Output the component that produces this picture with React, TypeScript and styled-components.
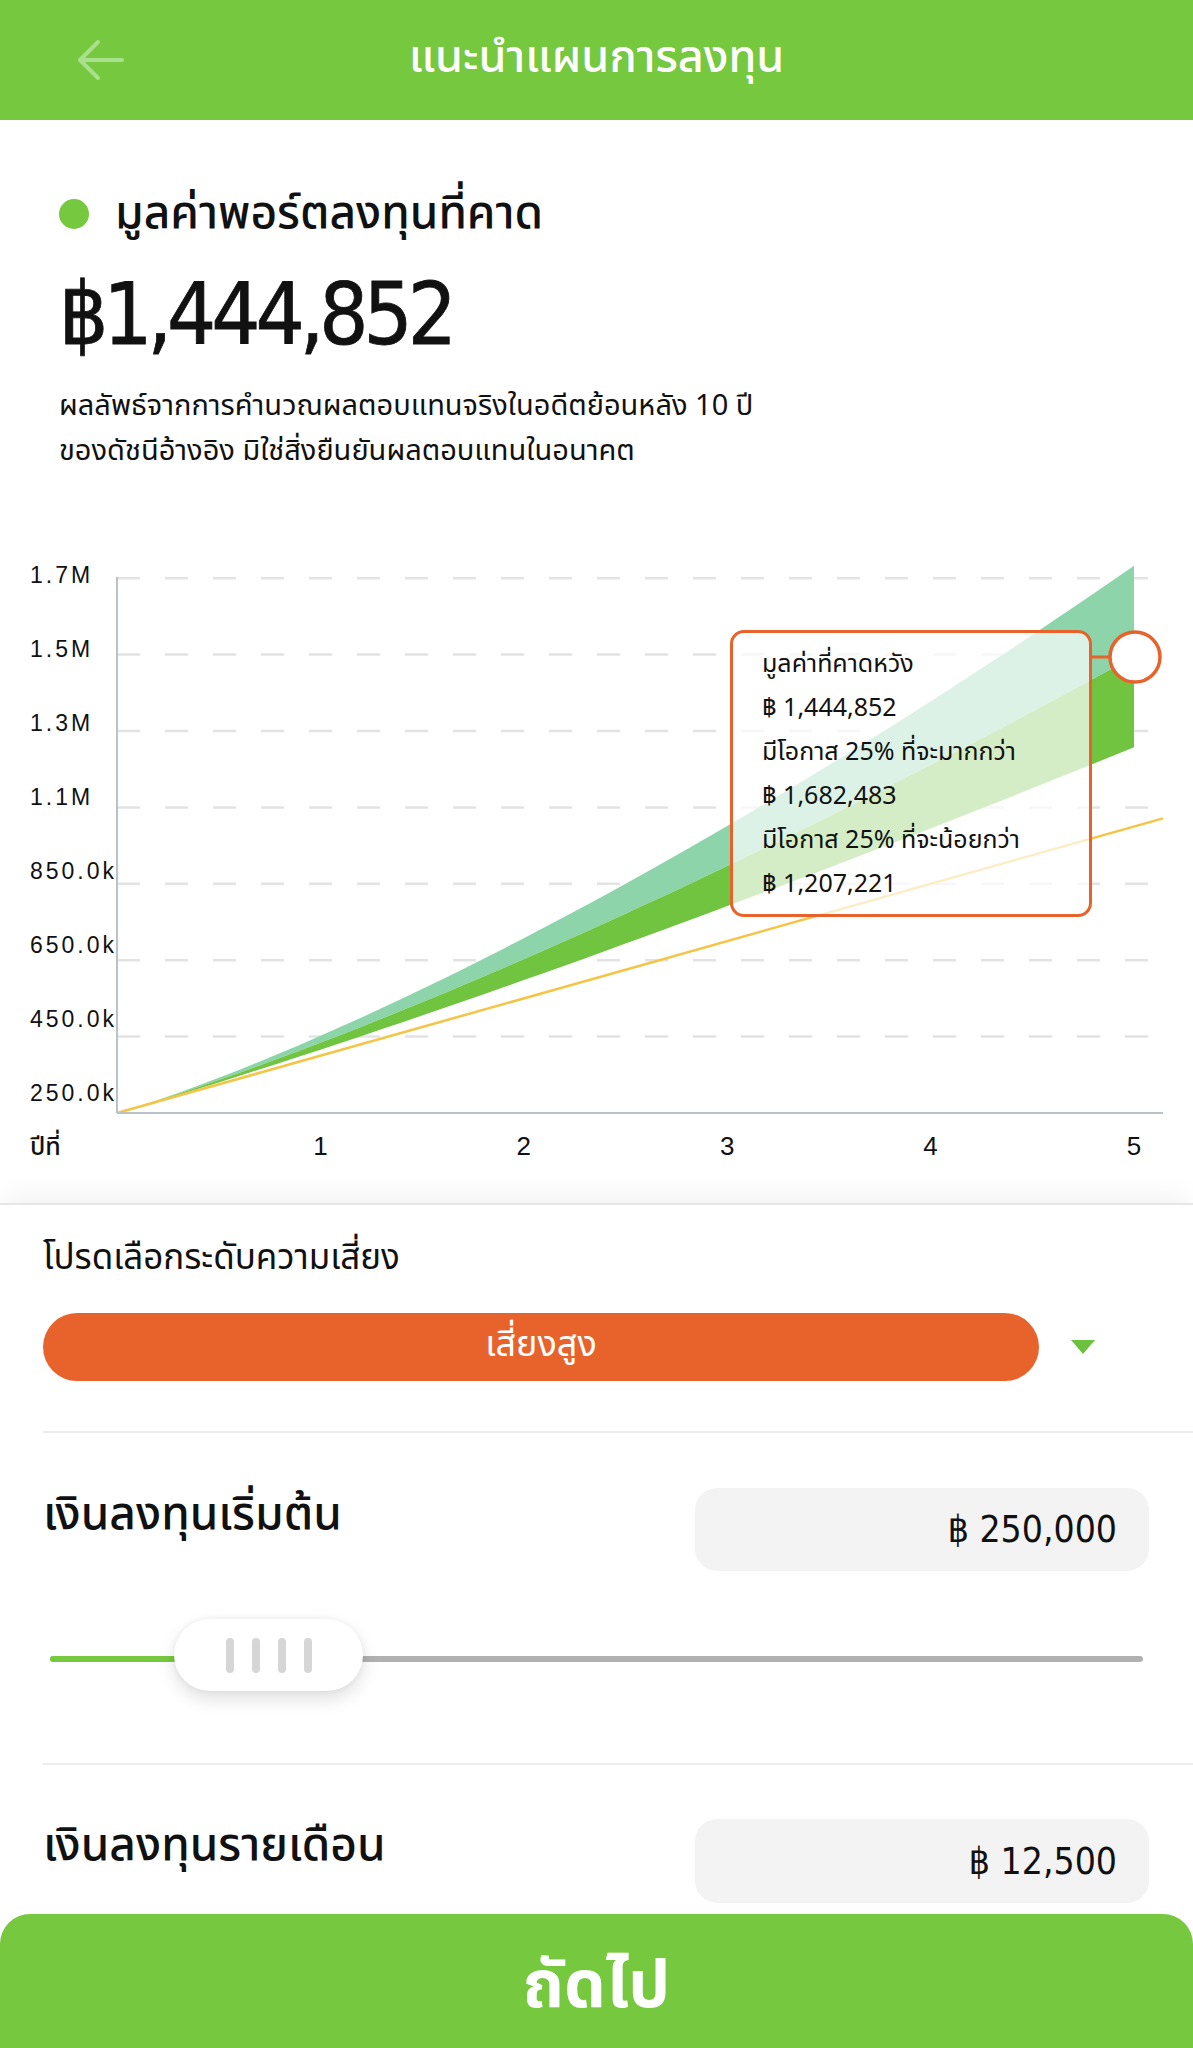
import React from "react";
import styled, { createGlobalStyle } from "styled-components";

const THAI = `"Noto Sans Thai", "Noto Sans Thai UI", "Noto Sans", "Loma", "Garuda", sans-serif`;
const NUM = `"Liberation Sans Narrow", "DejaVu Sans Condensed", "Noto Sans Thai", "Noto Sans", sans-serif`;

const GREEN = "#76C83F";
const ORANGE = "#E8632B";

const GlobalStyle = createGlobalStyle`
  html, body { margin: 0; padding: 0; background: #fff; }
  body { font-family: ${THAI}; color: #111; }
  * { box-sizing: border-box; }
`;

const Page = styled.div`
  width: 1193px;
  height: 2048px;
  display: flex;
  flex-direction: column;
  background: #fff;
  overflow: hidden;
`;

const Header = styled.header`
  height: 120px;
  flex: none;
  background: ${GREEN};
  display: grid;
  grid-template-columns: 1fr auto 1fr;
  align-items: center;
`;

const BackButton = styled.button`
  justify-self: start;
  margin-left: 74px;
  padding: 0;
  border: 0;
  background: none;
  display: flex;
  align-items: center;
`;

const HeaderTitle = styled.h1`
  margin: 0 0 4px;
  font-family: ${THAI};
  font-weight: 500;
  font-size: 45px;
  color: #fff;
`;

const Summary = styled.section`
  padding: 68px 59px 0;
  height: 350px;
  flex: none;
`;

const HeadingRow = styled.div`
  display: flex;
  align-items: center;
  gap: 26px;
  height: 52px;
`;

const Dot = styled.span`
  width: 30px;
  height: 30px;
  border-radius: 50%;
  background: ${GREEN};
  flex: none;
`;

const Heading = styled.h2`
  margin: 0;
  font-size: 46px;
  font-weight: 500;
  line-height: 52px;
`;

const BigValue = styled.div`
  margin-top: 26px;
  font-family: ${NUM};
  font-size: 86px;
  font-weight: 500;
  line-height: 96px;
  letter-spacing: -5px;
  color: #111;
  -webkit-text-stroke: 0.8px #111;
`;

const Note = styled.p`
  margin: 22px 0 0;
  font-size: 29px;
  line-height: 45px;
  color: #111;
`;

const ChartWrap = styled.div`
  position: relative;
  height: 733px;
  flex: none;
`;

const ChartSvg = styled.svg`
  display: block;
`;

const Tooltip = styled.div`
  position: absolute;
  left: 730px;
  top: 160px;
  width: 362px;
  height: 287px;
  border: 3px solid ${ORANGE};
  border-radius: 14px;
  background: rgba(255, 255, 255, 0.7);
  padding: 9px 0 0 29px;
  font-size: 25px;
  line-height: 44px;
  color: #111;
`;

const TipLine = styled.div`
  white-space: nowrap;
`;

const Panel = styled.section`
  flex: 1;
  display: flex;
  flex-direction: column;
  border-top: 2px solid #e6e6e6;
  box-shadow: 0 -14px 24px -6px rgba(0, 0, 0, 0.05);
`;

const PanelBody = styled.div`
  display: flex;
  flex-direction: column;
  padding-left: 43px;
`;

const RiskLabel = styled.div`
  margin-top: 32px;
  font-size: 35px;
  line-height: 44px;
`;

const RiskRow = styled.div`
  margin-top: 32px;
  display: flex;
  align-items: center;
  gap: 32px;
`;

const RiskPill = styled.button`
  width: 996px;
  height: 68px;
  border: 0;
  border-radius: 34px;
  background: ${ORANGE};
  color: #fff;
  font-family: ${THAI};
  font-size: 36px;
  font-weight: 400;
  padding: 0 0 4px;
`;

const Caret = styled.span`
  width: 0;
  height: 0;
  border-left: 12px solid transparent;
  border-right: 12px solid transparent;
  border-top: 14px solid #6cc23e;
`;

const Divider = styled.hr<{ $top: number }>`
  margin: ${(p) => p.$top}px 0 0;
  border: 0;
  border-top: 2px solid #ececec;
  height: 0;
`;

const InputRow = styled.div<{ $top: number }>`
  margin-top: ${(p) => p.$top}px;
  padding-right: 44px;
  display: flex;
  justify-content: space-between;
  align-items: flex-start;
`;

const InputLabel = styled.div`
  margin-top: 2px;
  font-size: 46px;
  line-height: 50px;
  font-weight: 500;
`;

const ValueBox = styled.div<{ $h: number }>`
  width: 454px;
  height: ${(p) => p.$h}px;
  border-radius: 22px;
  background: #f3f3f3;
  display: flex;
  align-items: center;
  justify-content: flex-end;
  padding: 0 32px 0 0;
  font-family: ${NUM};
  font-size: 37px;
  color: #111;
`;

const Slider = styled.div`
  position: relative;
  margin: 48px 50px 0 7px;
  height: 72px;
  display: flex;
  align-items: center;
`;

const Track = styled.div`
  flex: 1;
  height: 6px;
  margin-top: 8px;
  border-radius: 3px;
  background: #b1b1b1;
  overflow: hidden;
  display: flex;
`;

const TrackFill = styled.div`
  height: 100%;
  background: ${GREEN};
`;

const Thumb = styled.div`
  position: absolute;
  top: 0;
  width: 189px;
  height: 72px;
  border-radius: 36px;
  background: #fff;
  box-shadow: 0 8px 18px rgba(0, 0, 0, 0.12), 0 0 6px rgba(0, 0, 0, 0.06);
  display: flex;
  align-items: center;
  justify-content: center;
  gap: 18px;
`;

const Grip = styled.span`
  width: 8px;
  height: 35px;
  border-radius: 4px;
  background: #d6d6d6;
`;

const NextButton = styled.button`
  margin-top: auto;
  height: 134px;
  flex: none;
  width: 100%;
  border: 0;
  border-radius: 30px 30px 0 0;
  background: ${GREEN};
  color: #fff;
  font-family: ${THAI};
  font-size: 66px;
  font-weight: 700;
  padding: 12px 0 0;
`;

// ---------- chart data ----------
const OFF = 470;
const X0 = 117;
const X5 = 1134;
const AXIS_Y = 1113;
const xOf = (t: number) => X0 + ((X5 - X0) * t) / 5;
const yOf = (v: number) => AXIS_Y - ((v - 250000) / 200000) * 76.4 - OFF;
const contrib = (t: number) => 250000 + 150000 * t;
const curve = (extra: number) => (t: number) => contrib(t) + extra * Math.pow(t / 5, 1.6);
const upper = curve(682483);
const mid = curve(444852);
const lower = curve(207221);

const pts = (f: (t: number) => number, reverse = false) => {
  const arr: string[] = [];
  for (let i = 0; i <= 50; i++) {
    const t = (i / 50) * 5;
    arr.push(`${xOf(t).toFixed(1)},${yOf(f(t)).toFixed(1)}`);
  }
  if (reverse) arr.reverse();
  return arr.join(" ");
};

const gridVals = [450000, 650000, 850000, 1050000, 1250000, 1450000, 1650000];
const yLabels = [
  { t: "1.7M", y: 577 },
  { t: "1.5M", y: 651 },
  { t: "1.3M", y: 725 },
  { t: "1.1M", y: 799 },
  { t: "850.0k", y: 873 },
  { t: "650.0k", y: 947 },
  { t: "450.0k", y: 1021 },
  { t: "250.0k", y: 1095 },
];

const Chart: React.FC = () => {
  const yLineEnd = 1163;
  const tEnd = ((yLineEnd - X0) / (X5 - X0)) * 5;
  return (
    <ChartSvg width={1193} height={733} viewBox="0 0 1193 733">
      {gridVals.map((v) => (
        <line
          key={v}
          x1={X0}
          x2={1152}
          y1={yOf(v)}
          y2={yOf(v)}
          stroke="#e3e3e3"
          strokeWidth={2.5}
          strokeDasharray="23 25"
        />
      ))}
      <polygon points={`${pts(upper)} ${pts(mid, true)}`} fill="#8dd4ab" />
      <polygon points={`${pts(mid)} ${pts(lower, true)}`} fill="#70c440" />
      <line
        x1={X0}
        y1={yOf(contrib(0))}
        x2={yLineEnd}
        y2={yOf(contrib(tEnd))}
        stroke="#f4c444"
        strokeWidth={2.5}
      />
      <line x1={X0} y1={577 - OFF} x2={X0} y2={AXIS_Y - OFF} stroke="#b9c1c9" strokeWidth={2} />
      <line x1={X0} y1={AXIS_Y - OFF} x2={1163} y2={AXIS_Y - OFF} stroke="#b9c1c9" strokeWidth={2} />
      {yLabels.map((l) => (
        <text
          key={l.t}
          x={30}
          y={l.y - OFF}
          dominantBaseline="middle"
          fontFamily='"Liberation Sans", Arial, sans-serif'
          fontSize={23}
          letterSpacing={3}
          fill="#111"
        >
          {l.t}
        </text>
      ))}
      <text
        x={30}
        y={1148 - OFF}
        dominantBaseline="middle"
        fontFamily={THAI}
        fontSize={25}
        fontWeight={500}
        fill="#111"
      >
        ปีที่
      </text>
      {[1, 2, 3, 4, 5].map((n) => (
        <text
          key={n}
          x={xOf(n)}
          y={1148 - OFF}
          textAnchor="middle"
          dominantBaseline="middle"
          fontFamily='"Liberation Sans", Arial, sans-serif'
          fontSize={26}
          fill="#111"
        >
          {n}
        </text>
      ))}
      <line x1={1092} y1={657 - OFF} x2={1110} y2={657 - OFF} stroke={ORANGE} strokeWidth={3} />
      <circle cx={1135} cy={657 - OFF} r={25} fill="#fff" stroke={ORANGE} strokeWidth={3.5} />
    </ChartSvg>
  );
};

export default function App() {
  return (
    <Page>
      <GlobalStyle />
      <Header>
        <BackButton aria-label="back">
          <svg width="52" height="44" viewBox="0 0 52 44" fill="none">
            <path
              d="M24 4 L6 22 L24 40 M6 22 H48"
              stroke="#a9e08c"
              strokeWidth="4"
              strokeLinecap="round"
              strokeLinejoin="round"
            />
          </svg>
        </BackButton>
        <HeaderTitle>แนะนำแผนการลงทุน</HeaderTitle>
        <span />
      </Header>

      <Summary>
        <HeadingRow>
          <Dot />
          <Heading>มูลค่าพอร์ตลงทุนที่คาด</Heading>
        </HeadingRow>
        <BigValue>฿1,444,852</BigValue>
        <Note>
          ผลลัพธ์จากการคำนวณผลตอบแทนจริงในอดีตย้อนหลัง 10 ปี
          <br />
          ของดัชนีอ้างอิง มิใช่สิ่งยืนยันผลตอบแทนในอนาคต
        </Note>
      </Summary>

      <ChartWrap>
        <Chart />
        <Tooltip>
          <TipLine>มูลค่าที่คาดหวัง</TipLine>
          <TipLine>฿ 1,444,852</TipLine>
          <TipLine>มีโอกาส 25% ที่จะมากกว่า</TipLine>
          <TipLine>฿ 1,682,483</TipLine>
          <TipLine>มีโอกาส 25% ที่จะน้อยกว่า</TipLine>
          <TipLine>฿ 1,207,221</TipLine>
        </Tooltip>
      </ChartWrap>

      <Panel>
        <PanelBody>
          <RiskLabel>โปรดเลือกระดับความเสี่ยง</RiskLabel>
          <RiskRow>
            <RiskPill>เสี่ยงสูง</RiskPill>
            <Caret />
          </RiskRow>
          <Divider $top={50} />
          <InputRow $top={55}>
            <InputLabel>เงินลงทุนเริ่มต้น</InputLabel>
            <ValueBox $h={83}>฿ 250,000</ValueBox>
          </InputRow>
          <Slider>
            <Track>
              <TrackFill style={{ width: "14%" }} />
            </Track>
            <Thumb style={{ left: "124px" }}>
              <Grip />
              <Grip />
              <Grip />
              <Grip />
            </Thumb>
          </Slider>
          <Divider $top={72} />
          <InputRow $top={54}>
            <InputLabel>เงินลงทุนรายเดือน</InputLabel>
            <ValueBox $h={84}>฿ 12,500</ValueBox>
          </InputRow>
        </PanelBody>
        <NextButton>ถัดไป</NextButton>
      </Panel>
    </Page>
  );
}
